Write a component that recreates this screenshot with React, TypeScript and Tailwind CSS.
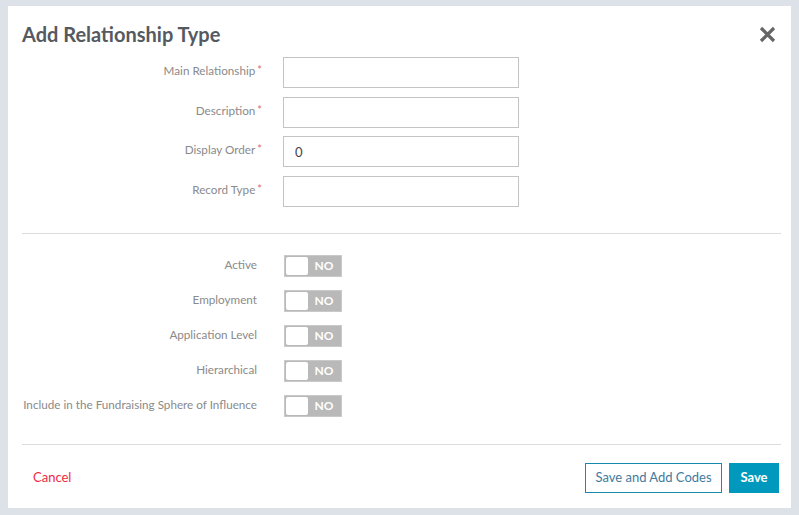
import React from 'react';

const fieldRows = [
  { label: 'Main Relationship', value: '' },
  { label: 'Description', value: '' },
  { label: 'Display Order', value: '0' },
  { label: 'Record Type', value: '' },
];

const toggleRows = [
  'Active',
  'Employment',
  'Application Level',
  'Hierarchical',
  'Include in the Fundraising Sphere of Influence',
];

const Toggle = () => (
  <div className="flex h-[22px] w-[58px] items-stretch border border-[#c9c9c9] bg-[#b9b9b9] p-px">
    <div className="w-[22px] rounded-[2px] bg-white" />
    <div className="flex flex-1 items-center justify-center text-[12px] font-bold text-white">NO</div>
  </div>
);

const App: React.FC = () => {
  return (
    <div className="h-[515px] w-[799px] bg-[#dde1e8] pl-[8px] pr-[8px] pt-[6px] font-['Lato','Liberation_Sans',sans-serif]">
      <div className="h-[502px] bg-white pt-[14px]">
        {/* Header */}
        <div className="flex h-[28px] items-center justify-between pl-[14px] pr-[14px]">
          <h1 className="text-[20px] font-bold leading-[28px] text-[#555a60]">Add Relationship Type</h1>
          <svg width="17" height="17" viewBox="0 0 17 17" className="mr-[1px]">
            <path d="M2 2 L15 15 M15 2 L2 15" stroke="#666" strokeWidth="3.2" strokeLinecap="butt" />
          </svg>
        </div>

        {/* Text fields */}
        <div className="mt-[9px] flex flex-col gap-[8.7px]">
          {fieldRows.map((row) => (
            <div key={row.label} className="flex items-start">
              <label className="w-[254px] pt-[5px] text-right text-[11.7px] leading-[16px] text-[#8a8a8a]">
                {row.label}
                <span className="ml-[2px] align-top text-[11px] text-[#e86767]">*</span>
              </label>
              <input
                readOnly
                value={row.value}
                className="ml-[21px] h-[31px] w-[236px] border border-[#c4c4c4] px-[11px] text-[13px] text-[#444] outline-none"
              />
            </div>
          ))}
        </div>

        <div className="ml-[14px] mr-[10px] mt-[26px] border-t border-[#dcdcdc]" />

        {/* Toggles */}
        <div className="mt-[21px] flex flex-col gap-[13px]">
          {toggleRows.map((label) => (
            <div key={label} className="flex items-start">
              <span className="w-[249px] pt-px text-right text-[11.7px] leading-[16px] text-[#8a8a8a]">{label}</span>
              <div className="ml-[27px]">
                <Toggle />
              </div>
            </div>
          ))}
        </div>

        <div className="ml-[14px] mr-[10px] mt-[27px] border-t border-[#dcdcdc]" />

        {/* Footer */}
        <div className="mt-[18px] flex items-center justify-between pl-[25px] pr-[12px]">
          <button className="text-[13px] text-[#ee2a45]">Cancel</button>
          <div className="flex gap-[7px]">
            <button className="h-[30px] w-[137px] border border-[#1a88ad] text-[13px] text-[#3f7aa0]">
              Save and Add Codes
            </button>
            <button className="h-[30px] w-[50px] bg-[#0099bd] text-[13px] font-bold text-white">Save</button>
          </div>
        </div>
      </div>
    </div>
  );
};

export default App;
